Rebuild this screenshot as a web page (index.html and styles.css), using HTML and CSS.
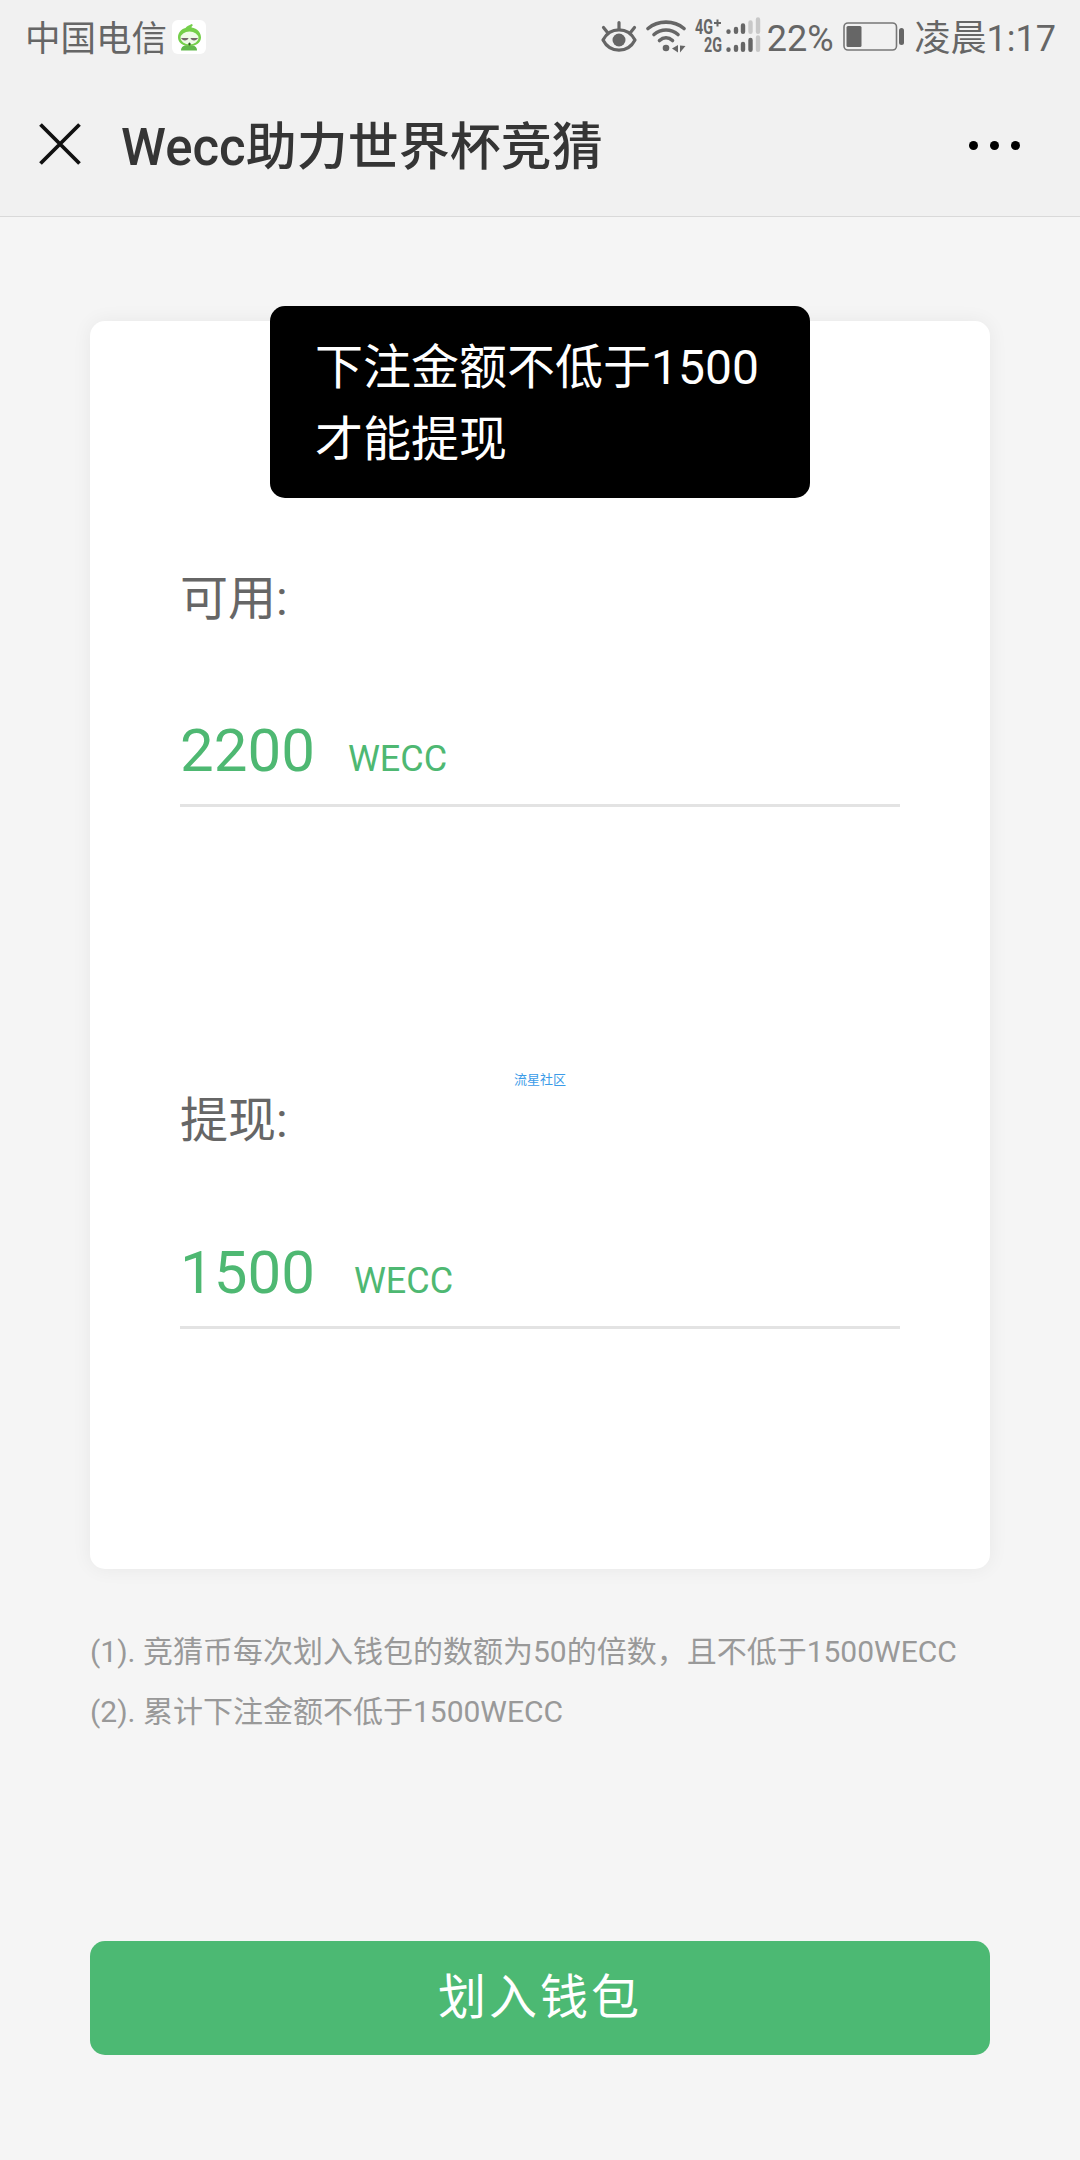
FILE: index.html
```html
<!DOCTYPE html>
<html lang="zh-CN">
<head>
	<meta charset="UTF-8">
	<meta name="viewport" content="width=device-width, initial-scale=1.0">
	<title>Wecc助力世界杯竞猜</title>
	<link rel="stylesheet" href="styles.css">
</head>
<body>
	<div class="status-bar">
		<span class="carrier">中国电信</span>
		<svg class="app-icon" width="34" height="34" viewBox="0 0 34 34">
			<rect width="34" height="34" rx="6" fill="#fff"/>
			<path d="M9 30.500c0-4 3-5.500 8-5.500s8 1.500 8 5.500z" fill="#62b94c"/>
			<path d="M13.500 8c1-2 4-2.500 6-4l1.500 1c-1 1-1.500 1.500-1.500 2.500 6 1 9.500 5 9.500 10 0 5-5 8.500-11.500 8.500S6 22.500 6 17.500c0-4.500 3-8.500 7.500-9.500z" fill="#75cf4b"/>
			<ellipse cx="17.500" cy="18" rx="9" ry="6.500" fill="#effbe8"/>
			<path d="M9 18h7.500c-.5 3-6 3.500-7.500 0zM26 18h-7.500c.5 3 6 3.500 7.500 0z" fill="#75686c"/>
			<ellipse cx="17.500" cy="24" rx="1.200" ry="1.600" fill="#355c2b"/>
		</svg>
		<div class="status-right">
			<svg class="eye" width="36" height="34" viewBox="0 0 36 34">
				<g fill="none" stroke="#666" stroke-width="3.200" stroke-linecap="round" stroke-linejoin="round">
					<path d="M2 20C9 6.500 27 6.500 34 20C27 33.500 9 33.500 2 20z"/>
					<path d="M18 2.500v7M2.500 7.500l4 5M33.500 7.500l-4 5"/>
				</g>
				<circle cx="18" cy="20" r="6.500" fill="#666"/>
			</svg>
			<svg class="wifi" width="40" height="34" viewBox="0 0 40 34">
				<g fill="none" stroke="#666" stroke-width="3.600" stroke-linecap="round">
					<path d="M2 8.500C12 0 28 0 38 8.500"/>
					<path d="M8 14.500c7-6 17-6 24 0"/>
					<path d="M13.500 20.500c4-3.700 9-3.700 13 0"/>
				</g>
				<circle cx="20" cy="28" r="3.300" fill="#666"/>
				<path d="M32 25v7.500L26 28.500zM34 25.500v7l5.500-6.500z" fill="#666"/>
			</svg>
			<svg class="signal" width="68" height="38" viewBox="0 0 68 38">
				<g class="signal-text">
					<text x="1" y="17.500" textLength="18" lengthAdjust="spacingAndGlyphs">4G</text>
					<text x="10" y="36" textLength="18" lengthAdjust="spacingAndGlyphs">2G</text>
				</g>
				<g fill="none" stroke-width="4.400" stroke-linecap="round">
					<path d="M20 7h7M23.500 3.500v7" stroke="#666" stroke-width="2" stroke-linecap="butt"/>
					<path d="M34.500 15.400v.4M42 13v2.800M49 9.500v6.300M34.500 33.400v.4M42 31v2.800M49 28v5.800M56.500 24v9.800" stroke="#666"/>
					<path d="M56.500 6.500v9.300M64 3.500v12.300M64 21.500v12.300" stroke="#c8c8c8"/>
				</g>
			</svg>
			<span class="percent">22%</span>
			<svg class="battery" width="62" height="30" viewBox="0 0 62 30">
				<rect x="1" y="1" width="52.500" height="27" rx="4" fill="none" stroke="#777" stroke-width="1.600"/>
				<rect x="3.500" y="4" width="15" height="21" rx="1.500" fill="#666"/>
				<rect x="56" y="6" width="5" height="17" rx="2.500" fill="#666"/>
			</svg>
			<span class="time">凌晨1:17</span>
		</div>
	</div>
	<header class="header">
		<svg class="close" width="42" height="42" viewBox="0 0 42 42">
			<path d="M1.500 1.500l39 39M40.500 1.500l-39 39" stroke="#111" stroke-width="3.800"/>
		</svg>
		<h1 class="title">Wecc助力世界杯竞猜</h1>
		<div class="more"><i></i><i></i><i></i></div>
	</header>
	<main class="main">
		<section class="card">
			<div class="field">
				<p class="label">可用:</p>
				<p class="amount"><span class="num">2200</span><span class="unit">WECC</span></p>
			</div>
			<div class="field">
				<p class="label">提现:</p>
				<p class="amount"><span class="num">1500</span><span class="unit unit-out">WECC</span></p>
			</div>
		</section>
		<div class="tips">
			<p>(1). 竞猜币每次划入钱包的数额为50的倍数，且不低于1500WECC</p>
			<p>(2). 累计下注金额不低于1500WECC</p>
		</div>
		<button class="btn">划入钱包</button>
	</main>
	<div class="toast">下注金额不低于1500才能提现</div>
	<div class="watermark">流星社区</div>
</body>
</html>
```

FILE: styles.css
```css
* {
	box-sizing: border-box;
	margin: 0;
	padding: 0;
}

body {
	position: relative;
	height: 2160px;
	background-color: #f5f5f5;
	font-family: Roboto, "Noto Sans CJK SC", sans-serif;
	color: #666;
}

svg {
	display: block;
	flex: none;
}

.status-bar {
	display: flex;
	align-items: center;
	height: 72px;
	padding: 2px 24px 0 25px;
	background-color: #f1f1f1;
	font-size: 36px;
	line-height: 70px;
	white-space: nowrap;
}

.carrier, .percent, .time {
	padding-top: 3px;
}

.carrier {
	font-size: 35.500px;
}

.app-icon {
	margin-left: 5px;
}

.status-right {
	display: flex;
	align-items: center;
	margin-left: auto;
}

.wifi {
	margin-left: 9px;
}

.signal {
	margin: -4px 0 0 8px;
	overflow: visible;
}

.signal-text {
	font-size: 20px;
	font-weight: 700;
	fill: #666;
}

.percent {
	margin-left: 5px;
}

.battery {
	margin: 0 10px 0 9px;
}

.header {
	display: flex;
	align-items: center;
	height: 145px;
	padding: 0 60px 0 39px;
	background-color: #f1f1f1;
	border-bottom: 1px solid #d9d9d9;
}

.title {
	margin: -3px 0 0 40px;
	font-size: 51px;
	font-weight: 500;
	color: #353535;
}

.more {
	display: flex;
	gap: 12px;
	margin: 2px 0 0 auto;
}

.more i {
	width: 9px;
	height: 9px;
	border-radius: 50%;
	background-color: #000;
}

.main {
	padding: 104px 90px 0;
}

.card {
	height: 1248px;
	padding: 242px 90px 0;
	border-radius: 15px;
	background-color: #fff;
	box-shadow: 0 0 20px rgba(0, 0, 0, 0.06);
}

.field {
	height: 244px;
	margin-bottom: 278px;
	border-bottom: 3px solid #e3e3e3;
}

.label {
	font-size: 48px;
	line-height: 72px;
}

.amount {
	margin-top: 80px;
	line-height: 72px;
	color: #4eb872;
}

.num {
	font-size: 60px;
}

.unit {
	margin-left: 33px;
	font-size: 36px;
}

.unit-out {
	margin-left: 39px;
}

.tips {
	margin-top: 53px;
	font-size: 30px;
	line-height: 60px;
	color: #999;
	white-space: nowrap;
}

.btn {
	display: block;
	width: 900px;
	height: 114px;
	margin-top: 199px;
	padding-bottom: 11px;
	border: none;
	border-radius: 15px;
	background-color: #4cb973;
	font-family: inherit;
	font-size: 48px;
	letter-spacing: 3px;
	color: #fff;
}

.toast {
	position: absolute;
	top: 306px;
	left: 270px;
	width: 540px;
	padding: 26px 45px 22px;
	border-radius: 15px;
	background-color: #000;
	font-size: 48px;
	line-height: 72px;
	color: #fff;
}

.watermark {
	position: absolute;
	top: 1070px;
	left: 514px;
	font-size: 13px;
	line-height: 20px;
	color: #3b9be8;
}
```
